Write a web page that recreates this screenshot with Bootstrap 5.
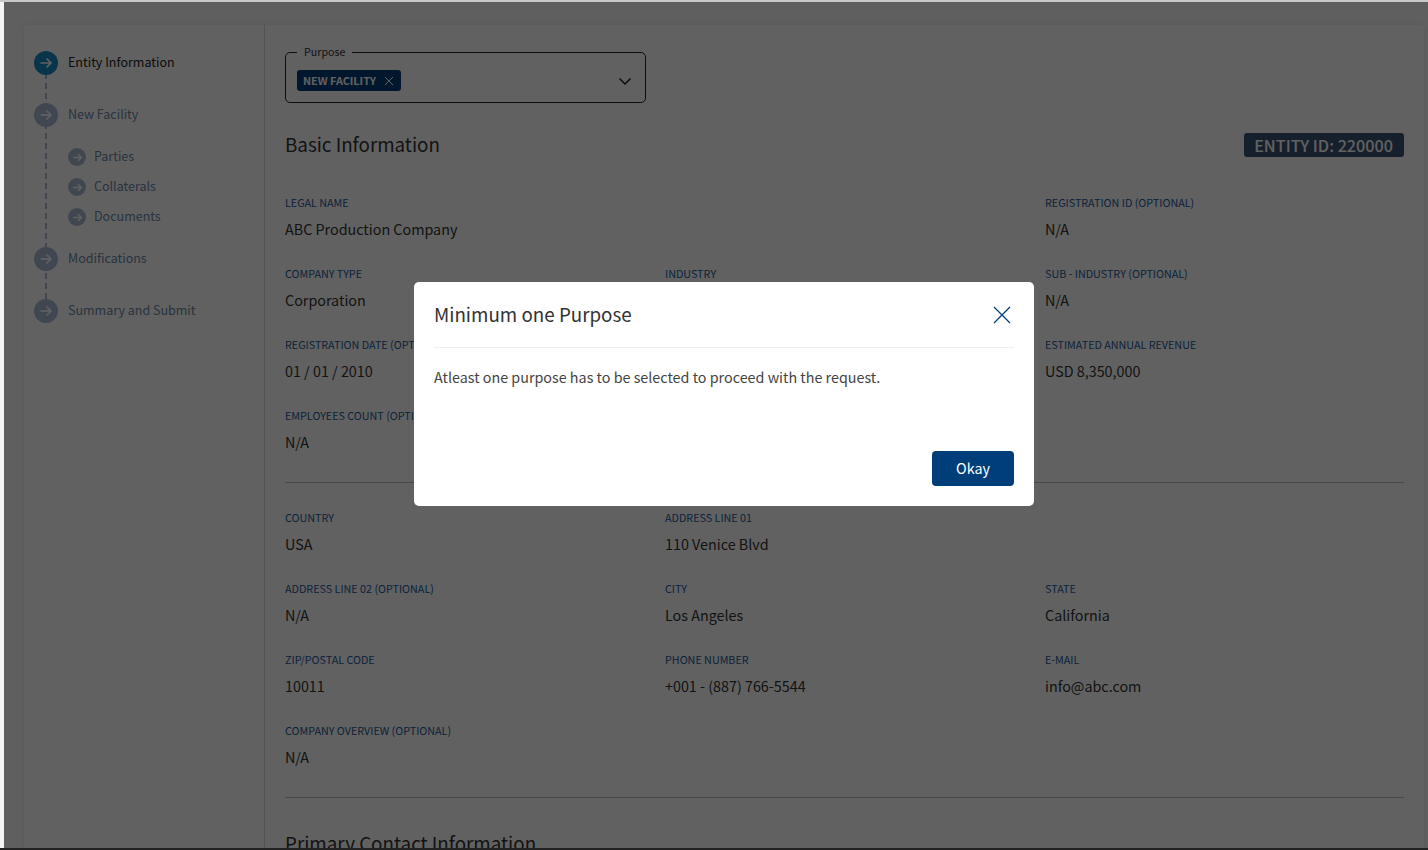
<!DOCTYPE html>
<html lang="en">
<head>
<meta charset="utf-8">
<title>Entity Information</title>
<link href="https://cdn.jsdelivr.net/npm/bootstrap@5.3.0/dist/css/bootstrap.min.css" rel="stylesheet">
<style>
html,body{height:850px;overflow:hidden}
body{background:#f5f5f5;font-family:"Noto Sans CJK SC","Noto Sans",sans-serif;color:#333;font-size:14.33px;position:relative}
.topstrip{height:2px;background:#c9c9c9}
.botstrip{height:2px;background:#222;position:absolute;left:0;right:0;bottom:0;z-index:2000}
.frame{height:846px;margin-left:4px;position:relative;overflow:hidden;background:#fafafa;padding:23px 4px 0 20px}
.panel{background:#fff;border-radius:4px 4px 0 0;box-shadow:0 0 6px rgba(0,0,0,.08);height:900px}
.side{width:241px;border-right:1px solid #d8d8d8;flex:none;padding-top:26px;position:relative}
.rail{position:absolute;left:21px;top:38px;height:248px;width:2px;background:repeating-linear-gradient(#a8bbd1 0 6px,transparent 6px 10px)}
.step{display:flex;align-items:center;gap:10px;margin-left:10px;height:24px;font-size:12.5px;color:#6b88a8;position:relative}
.step+.step{margin-top:28px}
.step.on{color:#222}
.slab{margin-top:-2px}
.dot{width:24px;height:24px;border-radius:50%;background:#a8bbd1;display:flex;align-items:center;justify-content:center;flex:none}
.on .dot{background:#1a8cc4}
.sub{display:flex;align-items:center;gap:8px;margin-left:44px;height:18px;font-size:12.5px;color:#6b88a8;position:relative}
.subs{margin-top:21px;margin-bottom:21px}
.subs .sub+.sub{margin-top:12px}
.dot.mini{width:18px;height:18px}
.main{padding:19px 20px 0;flex:1;min-width:0}
.selbox{width:361px;height:59px;border:1px solid #222;border-radius:5px;padding:0 11px;margin:0;position:relative}
.selbox legend{float:none;width:auto;font-size:10.7px;line-height:16px;margin:0;padding:0 7px;color:#333}
.chip{display:inline-flex;align-items:center;gap:8px;height:21px;padding:0 7px 0 6px;background:#003e7a;border-radius:3px;color:#fff;font-size:10.8px;font-weight:600;margin-top:10px;white-space:nowrap}
.caret{position:absolute;right:13px;top:17px}
.headrow{height:30px;margin-top:27px;margin-bottom:35px}
.sect{font-size:18.8px;font-weight:400;line-height:30px;margin:0;color:#333}
.headrow .sect{padding-bottom:2px}
.entid{background:#3a5573;color:#fff;font-size:16.2px;font-weight:500;line-height:24px;padding:0 11px 0 10px;border-radius:3px;margin-bottom:1px}
.fgrid{display:grid;grid-template-columns:repeat(3,380px);grid-auto-rows:71px}
.flab{font-size:10.75px;line-height:16px;color:#1d5c99;text-transform:uppercase;white-space:nowrap}
.fval{font-size:14.33px;line-height:24px;margin-top:6px;color:#333}
.rule{margin:3px 0 27px;border:0;border-top:1px solid #bdbdbd;opacity:1}
.rule.last{margin-bottom:30px}
.modal-backdrop.dim{position:absolute;width:100%;height:100%;opacity:.62;background:#000;z-index:1050}
.modal.dlg{display:block;position:absolute;z-index:1060;overflow:hidden}
.modal-dialog.dlgbox{max-width:620px;width:620px;margin:280px 0 0 410px}
.dlgbox .modal-content{border:0;border-radius:5px;height:224px;box-shadow:none}
.dlgbox .modal-header{margin:0 20px;padding:17px 0 17px;border-bottom:1px solid #efefef;height:66px}
.dlgbox .modal-title{font-size:18.8px;font-weight:400;line-height:30px;color:#333;margin-top:-2px}
.xbtn{background:none;border:0;padding:0;width:18px;height:18px;margin-right:3px;display:flex}
.dlgbox .modal-body{padding:17px 20px 0;font-size:14.33px;line-height:24px;height:83px;flex:none;color:#444}
.dlgbox .modal-footer{margin:0;padding:20px;border:0}
.okbtn{background:#003e7a;color:#fff;border:0;border-radius:4px;width:82px;height:35px;font-size:14.33px;padding:0 0 2px;margin:0}
</style>
</head>
<body>
<div class="topstrip"></div>
<div class="frame">
  <div class="panel d-flex">
    <aside class="side">
      <div class="rail"></div>
      <div class="step on"><span class="dot"><svg width="14" height="14" viewBox="0 0 14 14" fill="none" stroke="#fff" stroke-width="1.6"><path d="M1.5 7H12M7.500 2.500 12 7l-4.500 4.500"/></svg></span><span class="slab">Entity Information</span></div>
      <div class="step"><span class="dot"><svg width="14" height="14" viewBox="0 0 14 14" fill="none" stroke="#fff" stroke-width="1.6"><path d="M1.5 7H12M7.500 2.500 12 7l-4.500 4.500"/></svg></span><span class="slab">New Facility</span></div>
      <div class="subs">
        <div class="sub"><span class="dot mini"><svg width="11" height="11" viewBox="0 0 14 14" fill="none" stroke="#fff" stroke-width="1.8"><path d="M1.5 7H12M7.500 2.500 12 7l-4.500 4.500"/></svg></span><span class="slab">Parties</span></div>
        <div class="sub"><span class="dot mini"><svg width="11" height="11" viewBox="0 0 14 14" fill="none" stroke="#fff" stroke-width="1.8"><path d="M1.5 7H12M7.500 2.500 12 7l-4.500 4.500"/></svg></span><span class="slab">Collaterals</span></div>
        <div class="sub"><span class="dot mini"><svg width="11" height="11" viewBox="0 0 14 14" fill="none" stroke="#fff" stroke-width="1.8"><path d="M1.5 7H12M7.500 2.500 12 7l-4.500 4.500"/></svg></span><span class="slab">Documents</span></div>
      </div>
      <div class="step"><span class="dot"><svg width="14" height="14" viewBox="0 0 14 14" fill="none" stroke="#fff" stroke-width="1.6"><path d="M1.5 7H12M7.500 2.500 12 7l-4.500 4.500"/></svg></span><span class="slab">Modifications</span></div>
      <div class="step"><span class="dot"><svg width="14" height="14" viewBox="0 0 14 14" fill="none" stroke="#fff" stroke-width="1.6"><path d="M1.5 7H12M7.500 2.500 12 7l-4.500 4.500"/></svg></span><span class="slab">Summary and Submit</span></div>
    </aside>
    <main class="main">
      <fieldset class="selbox">
        <legend>Purpose</legend>
        <span class="chip">NEW FACILITY <svg width="10" height="10" viewBox="0 0 10 10" fill="none" stroke="#fff" stroke-width="1"><path d="M1 1l8 8M9 1 1 9"/></svg></span>
        <svg class="caret" width="14" height="9" viewBox="0 0 14 9" fill="none" stroke="#222" stroke-width="1.5"><path d="M1.500 1.500 7 7l5.500-5.500"/></svg>
      </fieldset>
      <div class="headrow d-flex justify-content-between align-items-center">
        <h2 class="sect">Basic Information</h2>
        <span class="entid">ENTITY ID: 220000</span>
      </div>
      <div class="fgrid">
        <div><div class="flab">Legal Name</div><div class="fval">ABC Production Company</div></div>
        <div></div>
        <div><div class="flab">Registration ID (Optional)</div><div class="fval">N/A</div></div>
        <div><div class="flab">Company Type</div><div class="fval">Corporation</div></div>
        <div><div class="flab">Industry</div></div>
        <div><div class="flab">Sub - Industry (Optional)</div><div class="fval">N/A</div></div>
        <div><div class="flab">Registration Date (Optional)</div><div class="fval">01 / 01 / 2010</div></div>
        <div></div>
        <div><div class="flab">Estimated Annual Revenue</div><div class="fval">USD 8,350,000</div></div>
        <div><div class="flab">Employees Count (Optional)</div><div class="fval">N/A</div></div>
      </div>
      <hr class="rule">
      <div class="fgrid">
        <div><div class="flab">Country</div><div class="fval">USA</div></div>
        <div><div class="flab">Address Line 01</div><div class="fval">110 Venice Blvd</div></div>
        <div></div>
        <div><div class="flab">Address Line 02 (Optional)</div><div class="fval">N/A</div></div>
        <div><div class="flab">City</div><div class="fval">Los Angeles</div></div>
        <div><div class="flab">State</div><div class="fval">California</div></div>
        <div><div class="flab">Zip/Postal Code</div><div class="fval">10011</div></div>
        <div><div class="flab">Phone Number</div><div class="fval">+001 - (887) 766-5544</div></div>
        <div><div class="flab">E-mail</div><div class="fval">info@abc.com</div></div>
        <div><div class="flab">Company Overview (Optional)</div><div class="fval">N/A</div></div>
      </div>
      <hr class="rule last">
      <h2 class="sect">Primary Contact Information</h2>
    </main>
  </div>
  <div class="modal-backdrop dim"></div>
  <div class="modal dlg" tabindex="-1" role="dialog">
    <div class="modal-dialog dlgbox">
      <div class="modal-content">
        <div class="modal-header justify-content-between">
          <h5 class="modal-title">Minimum one Purpose</h5>
          <button type="button" class="xbtn" aria-label="Close"><svg width="18" height="18" viewBox="0 0 18 18" fill="none" stroke="#003e7a" stroke-width="1.2"><path d="M1 1l16 16M17 1 1 17"/></svg></button>
        </div>
        <div class="modal-body">Atleast one purpose has to be selected to proceed with the request.</div>
        <div class="modal-footer"><button type="button" class="btn okbtn">Okay</button></div>
      </div>
    </div>
  </div>
</div>
<div class="botstrip"></div>
<script src="https://cdn.jsdelivr.net/npm/bootstrap@5.3.0/dist/js/bootstrap.bundle.min.js"></script>
</body>
</html>
